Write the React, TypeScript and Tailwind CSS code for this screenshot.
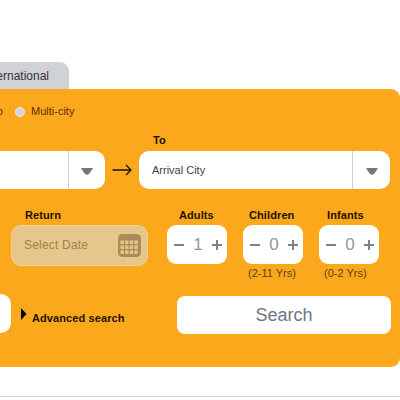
const font = { fontFamily: '"Liberation Sans", Arial, sans-serif' };

function Caret() {
  return (
    <svg width="12" height="7" viewBox="0 0 12 7" className="mt-[3px] block">
      <path d="M0 0H12L8.5 5.5 6 7 3.5 5.5Z" fill="#76767c" />
    </svg>
  );
}

function CityInput({ width, divider, text }: { width: string; divider: string; text?: string }) {
  return (
    <div className={`flex h-[38px] items-stretch rounded-[10px] bg-white ${width}`}>
      <div className="flex flex-1 items-center pl-[13px] text-[11px] text-[#3d3d4a]">{text}</div>
      <div className={`flex items-center justify-center border-l border-[#cfcfcf] ${divider}`}>
        <Caret />
      </div>
    </div>
  );
}

function Counter({ label, value, note, labelOffset, noteOffset }: {
  label: string;
  value: number;
  note?: string;
  labelOffset: string;
  noteOffset: string;
}) {
  return (
    <div className="flex w-[60px] flex-col">
      <div className={`h-[16px] whitespace-nowrap text-[11px] leading-[12px] font-bold tracking-[0.1px] text-[#1a1200] ${labelOffset}`}>
        {label}
      </div>
      <div className="flex h-[39px] items-center justify-between rounded-[9px] bg-white pl-[7px] pr-[5px]">
        <span className="h-[2px] w-[10px] bg-[#808285]" />
        <span className="text-[17px] leading-none text-[#8d97a5]">{value}</span>
        <span className="relative h-[10px] w-[10px]">
          <span className="absolute left-0 top-[4px] h-[2px] w-[10px] bg-[#808285]" />
          <span className="absolute left-[4px] top-0 h-[10px] w-[2px] bg-[#808285]" />
        </span>
      </div>
      {note && (
        <div className={`mt-[3px] whitespace-nowrap text-[11px] leading-[13px] text-[#5c4216] ${noteOffset}`}>{note}</div>
      )}
    </div>
  );
}

function CalendarIcon() {
  return (
    <svg width="23" height="23" viewBox="0 0 23 23" className="block">
      <rect width="23" height="23" rx="4.5" fill="#ab8b58" />
      {[0, 1, 2, 3].map((c) =>
        [0, 1, 2].map((r) => (
          <rect key={`${c}-${r}`} x={2.5 + c * 4.6} y={6.5 + r * 4.9} width="3.4" height="3.6" fill="#e7c68c" />
        )),
      )}
    </svg>
  );
}

export default function App() {
  return (
    <div className="h-[400px] w-[400px] overflow-hidden bg-white" style={font}>
      <div className="ml-[-100px] w-[500px] pt-[62px]">
        <div className="ml-[60px] flex h-[27px] w-[109px] items-center justify-end rounded-t-[9px] bg-[#d1d2d6] pr-[20px] text-[12px] text-[#333]">
          International
        </div>
        <div className="h-[278px] rounded-r-[9px] bg-[#fba81c] pr-[9px]">
          <div className="flex h-[44px] items-center pl-[75px] pt-[1px] text-[11px] text-[#5e2a05]">
            <span className="w-[28px] text-right">Trip</span>
            <span className="ml-[12px] h-[10px] w-[10px] rounded-full border border-[#eeeeee] bg-[#d4d4d4]" />
            <span className="ml-[6px]">Multi-city</span>
          </div>
          <div className="flex h-[18px] items-start pl-[253px] text-[11px] font-bold leading-[14px] text-[#1a1200]">To</div>
          <div className="flex items-center">
            <CityInput width="w-[205px]" divider="w-[37px]" />
            <div className="flex w-[34px] justify-center">
              <svg width="20" height="12" viewBox="0 0 20 12" className="block">
                <path d="M0.5 6H19M14 1 19 6l-5 5" fill="none" stroke="#111" strokeWidth="1.3" />
              </svg>
            </div>
            <CityInput width="w-[251px]" divider="w-[38px]" text="Arrival City" />
          </div>
          <div className="mt-[20px] flex items-start pl-[111px]">
            <div className="flex w-[137px] flex-col">
              <div className="h-[16px] pl-[14px] text-[11px] font-bold leading-[12px] tracking-[0.1px] text-[#1a1200]">Return</div>
              <div className="flex h-[41px] items-center justify-between rounded-[10px] border border-[#f3cf93] bg-[#e7c68c] pb-[1px] pl-[12px] pr-[6px] text-[12px] tracking-[0.2px] text-[#a0824f]">
                Select Date
                <CalendarIcon />
              </div>
            </div>
            <div className="ml-[19px] flex gap-[16px]">
              <Counter label="Adults" value={1} labelOffset="pl-[12px]" noteOffset="" />
              <Counter label="Children" value={0} note="(2-11 Yrs)" labelOffset="pl-[6px]" noteOffset="pl-[5px]" />
              <Counter label="Infants" value={0} note="(0-2 Yrs)" labelOffset="pl-[8px]" noteOffset="pl-[5px]" />
            </div>
          </div>
          <div className="mt-[14px] flex items-start">
            <div className="h-[39px] w-[111px] rounded-r-[10px] bg-white" />
            <svg width="6" height="12" viewBox="0 0 6 12" className="ml-[10px] mt-[14px] block">
              <path d="M0 0 5.5 6 0 12Z" fill="#000" />
            </svg>
            <span className="ml-[5px] mt-[18px] text-[11px] font-bold leading-[13px] tracking-[0.1px] text-[#1a1200]">
              Advanced search
            </span>
            <button className="ml-auto mt-[2px] h-[38px] w-[214px] rounded-[8px] bg-white text-[18px] text-[#6f7682]">
              Search
            </button>
          </div>
        </div>
        <div className="mt-[29px] h-px bg-[#d4d4d4]" />
      </div>
    </div>
  );
}
